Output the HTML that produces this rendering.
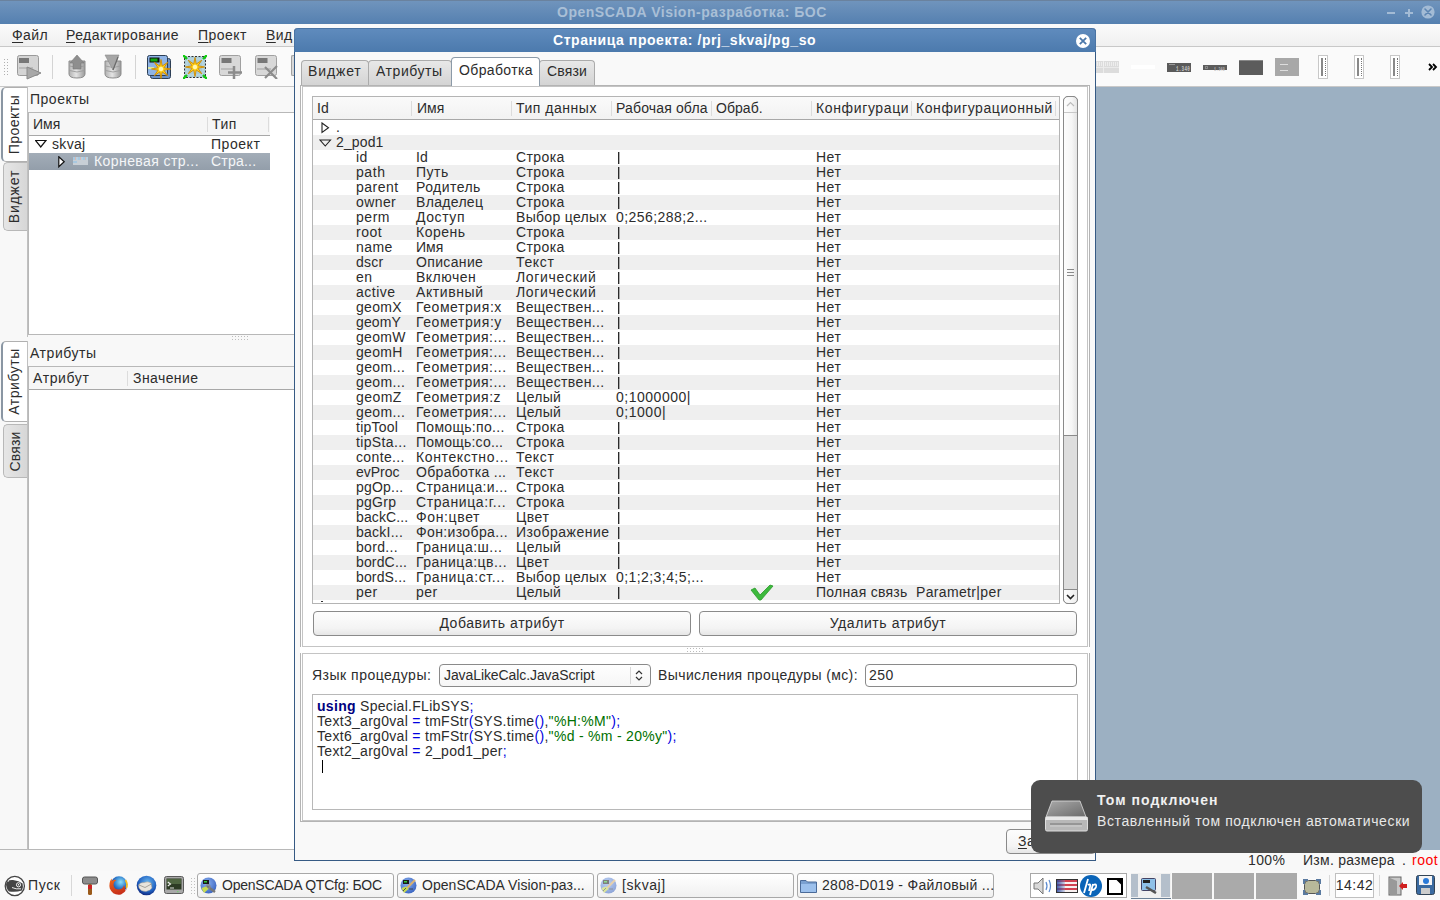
<!DOCTYPE html>
<html><head><meta charset="utf-8">
<style>
*{margin:0;padding:0;box-sizing:border-box}
html,body{width:1440px;height:900px;overflow:hidden;background:#f8f8f8;font-family:"Liberation Sans",sans-serif;font-size:14px;letter-spacing:0.45px;color:#2c2c2c}
.a{position:absolute}
.t{position:absolute;white-space:nowrap;line-height:15px}
#title{left:0;top:0;width:1440px;height:24px;background:linear-gradient(#7195bd,#5580b0);}
#title .tx{left:557px;top:5px;color:#a9bfd6;font-weight:bold;font-size:14px;letter-spacing:0.52px}
#menu{left:0;top:24px;width:1440px;height:23px;background:linear-gradient(#fbfbfb,#f0f0f0);border-bottom:1px solid #c8c8c8}
#tool{left:0;top:47px;width:1440px;height:40px;background:#fafafa;border-bottom:1px solid #c8c8c8}
#mdi{left:295px;top:87px;width:1145px;height:763px;background:#9cb0c2}
u{text-decoration:underline;text-decoration-thickness:1px;text-underline-offset:2px;}
</style></head><body>
<div id="title" class="a"><div class="a" style="left:0;top:0;width:1440px;height:1px;background:#6a829e"></div>
 <div class="a" style="left:1387px;top:12px;width:8px;height:2px;background:#a3bbd5"></div>
 <div class="a" style="left:1405px;top:12px;width:8px;height:2px;background:#a3bbd5"></div>
 <div class="a" style="left:1408px;top:9px;width:2px;height:8px;background:#a3bbd5"></div>
 <svg class="a" style="left:1421px;top:5px" width="14" height="14" viewBox="0 0 14 14"><circle cx="7" cy="7" r="6.6" fill="#a3bbd5"/><path d="M4 4 L10 10 M10 4 L4 10" stroke="#5d85b2" stroke-width="1.6" stroke-linecap="round"/></svg><div class="t tx">OpenSCADA Vision-разработка: БОС</div></div>
<div id="menu" class="a">
 <div class="t" style="left:12px;top:4px"><u>Ф</u>айл</div>
 <div class="t" style="left:66px;top:4px"><u>Р</u>едактирование</div>
 <div class="t" style="left:198px;top:4px"><u>П</u>роект</div>
 <div class="t" style="left:266px;top:4px"><u>В</u>ид</div>
</div>
<div id="tool" class="a">
 <div class="a" style="left:3px;top:11px;width:6px;height:18px;background-image:radial-gradient(#b0b0b0 0.7px,transparent 0.9px);background-size:3px 3px"></div>
 <svg class="a" style="left:16px;top:7px" width="26" height="26" viewBox="0 0 26 26">
  <rect x="1.5" y="1.5" width="21" height="20" rx="2" fill="#d4d4d4" stroke="#9a9a9a"/>
  <rect x="3" y="4" width="10" height="5" fill="#777"/>
  <rect x="3" y="13" width="14" height="2" fill="#bbb"/>
  <path d="M11 13 L25 19 L11 25 Z" fill="#a8a8a8" stroke="#8a8a8a"/>
 </svg>
 <div class="a" style="left:52px;top:8px;width:1px;height:24px;background:#d4d4d4"></div>
 <svg class="a" style="left:68px;top:7px" width="18" height="26" viewBox="0 0 18 26">
  <defs><linearGradient id="cyl" x1="0" x2="1"><stop offset="0" stop-color="#b0b0b0"/><stop offset="0.45" stop-color="#e4e4e4"/><stop offset="1" stop-color="#9a9a9a"/></linearGradient></defs>
  <path d="M1 7 V20 Q1 24 9 24 Q17 24 17 20 V7 Z" fill="url(#cyl)" stroke="#8c8c8c"/>
  <path d="M1.5 12 Q9 15 16.5 12 M1.5 16.5 Q9 19.5 16.5 16.5" fill="none" stroke="#9c9c9c" stroke-width="0.9"/>
  <path d="M9 1 L16 9 L13 9 L13 15 L5 15 L5 9 L2 9 Z" fill="#8e8e8e" stroke="#7a7a7a" stroke-width="0.6"/>
 </svg>
 <svg class="a" style="left:104px;top:7px" width="18" height="26" viewBox="0 0 18 26">
  <path d="M1 7 V20 Q1 24 9 24 Q17 24 17 20 V7 Z" fill="url(#cyl)" stroke="#8c8c8c"/>
  <path d="M1.5 12 Q9 15 16.5 12 M1.5 16.5 Q9 19.5 16.5 16.5" fill="none" stroke="#9c9c9c" stroke-width="0.9"/>
  <path d="M1 1 L15 1 L9 16 Z" fill="#a6a6a6" stroke="#8a8a8a" stroke-width="0.6"/>
  <path d="M14 3 L9 16" stroke="#6a6a6a" stroke-width="1.2"/>
 </svg>
 <div class="a" style="left:135px;top:8px;width:1px;height:24px;background:#d4d4d4"></div>
 <svg class="a" style="left:147px;top:8px" width="24" height="24" viewBox="0 0 24 24">
  <rect x="3.5" y="3.5" width="20" height="20" rx="2" fill="#6c92c8" stroke="#2c3e55"/>
  <rect x="0.5" y="0.5" width="20" height="20" rx="2" fill="#8fb4e6" stroke="#2c3e55"/>
  <rect x="2.5" y="2.5" width="10" height="5" fill="#111"/>
  <rect x="3.5" y="3.5" width="7" height="3" fill="#1a1"/>
  <rect x="1" y="12" width="6" height="2" fill="#dde8a0"/>
  <path d="M14.00,4.50 L15.22,11.04 L20.72,7.28 L16.96,12.78 L23.50,14.00 L16.96,15.22 L20.72,20.72 L15.22,16.96 L14.00,23.50 L12.78,16.96 L7.28,20.72 L11.04,15.22 L4.50,14.00 L11.04,12.78 L7.28,7.28 L12.78,11.04 Z" fill="#ffd21a" stroke="#d08a00" stroke-width="0.9"/><circle cx="14" cy="14" r="2.2" fill="#fff6b0"/>
 </svg>
 <svg class="a" style="left:183px;top:8px" width="24" height="24" viewBox="0 0 24 24">
  <rect x="1.5" y="1.5" width="21" height="21" fill="#a9cbd6" stroke="#333" stroke-dasharray="2 1.5"/>
  <path d="M4 4 L20 4 L20 20 L4 20 Z" fill="none" stroke="#c8e0e8" stroke-width="0.8"/>
  <path d="M0 0 L4 4 M24 0 L20 4 M0 24 L4 20 M24 24 L20 20" stroke="#1c1" stroke-width="2.4"/>
  <path d="M12.00,2.50 L13.22,9.04 L18.72,5.28 L14.96,10.78 L21.50,12.00 L14.96,13.22 L18.72,18.72 L13.22,14.96 L12.00,21.50 L10.78,14.96 L5.28,18.72 L9.04,13.22 L2.50,12.00 L9.04,10.78 L5.28,5.28 L10.78,9.04 Z" fill="#ffd21a" stroke="#d08a00" stroke-width="0.9"/><circle cx="12" cy="12" r="2.2" fill="#fff6b0"/>
 </svg>
 <svg class="a" style="left:219px;top:8px" width="24" height="24" viewBox="0 0 24 24">
  <rect x="0.5" y="0.5" width="21" height="20" rx="2" fill="#d8d8d8" stroke="#a0a0a0"/>
  <rect x="2.5" y="3" width="10" height="5" fill="#777"/>
  <rect x="2" y="13" width="14" height="2" fill="#bbb"/>
  <path d="M15 11 V24 M9 17.5 H23" stroke="#8c8c8c" stroke-width="2.5"/>
 </svg>
 <svg class="a" style="left:255px;top:8px" width="24" height="24" viewBox="0 0 24 24">
  <rect x="0.5" y="0.5" width="21" height="20" rx="2" fill="#d8d8d8" stroke="#a0a0a0"/>
  <rect x="2.5" y="3" width="10" height="5" fill="#777"/>
  <rect x="2" y="13" width="14" height="2" fill="#bbb"/>
  <path d="M10 12 L22 24 M22 11 L10 23" stroke="#8c8c8c" stroke-width="2.2"/>
 </svg>
 <div class="a" style="left:291px;top:8px;width:5px;height:21px;background:#d8d8d8;border:1px solid #a0a0a0;border-right:none;border-radius:2px 0 0 2px"></div>
 <!-- right side -->
 <div class="a" style="left:1096px;top:14px;width:23px;height:12px;background:#dcdcdc"></div>
 <div class="a" style="left:1096px;top:20px;width:23px;height:1px;background:#eaeaea"></div>
 <div class="a" style="left:1103px;top:14px;width:1px;height:12px;background:#ececec"></div>
 <div class="a" style="left:1097px;top:15px;width:21px;height:4px;background-image:repeating-linear-gradient(90deg,#f4f4f4 0 1px,transparent 1px 2px);opacity:.7"></div>
 <div class="a" style="left:1131px;top:18px;width:24px;height:4px;background:#fff"></div>
 <div class="a" style="left:1167px;top:16px;width:24px;height:9px;background:#5a5a5a"></div>
 <div class="a" style="left:1167px;top:14px;width:24px;height:2px;font-size:0"></div><div class="a" style="left:1169px;top:17px;width:6px;height:1px;background:#999"></div><svg class="a" style="left:1176px;top:17px" width="15" height="8"><text x="0" y="7" font-size="8" font-family="Liberation Mono" font-weight="bold" fill="#c4c4c4" textLength="14" lengthAdjust="spacingAndGlyphs">1.340</text></svg>
 <div class="a" style="left:1203px;top:18px;width:24px;height:5px;background:#5c5c5c"></div>
 <svg class="a" style="left:1214px;top:18px" width="12" height="6"><text x="0" y="5.5" font-size="6" font-family="Liberation Mono" font-weight="bold" fill="#bdbdbd" textLength="11" lengthAdjust="spacingAndGlyphs">1.340</text></svg><div class="a" style="left:1205px;top:19px;width:3px;height:3px;border:1px solid #888"></div>
 <div class="a" style="left:1239px;top:13px;width:24px;height:15px;background:#5c5c5c;border-top:1px solid #888"></div>
 <div class="a" style="left:1275px;top:11px;width:24px;height:18px;background:#a8a8a8"></div>
 <div class="a" style="left:1280px;top:17px;width:8px;height:7px;border-top:1px solid #ddd;border-bottom:1px solid #ddd"></div>
 <div class="a" style="left:1318px;top:8px;width:10px;height:24px;background:#fff;border:1px solid #c8c8c8"><div class="a" style="left:2px;top:2px;width:2px;height:18px;background:#888"></div><div class="a" style="left:5px;top:2px;width:2px;height:18px;border-right:1px dotted #777"></div></div>
 <div class="a" style="left:1354px;top:8px;width:10px;height:24px;background:#fff;border:1px solid #c8c8c8"><div class="a" style="left:2px;top:2px;width:2px;height:18px;background:#888"></div><div class="a" style="left:5px;top:2px;width:2px;height:18px;border-right:1px dotted #777"></div></div>
 <div class="a" style="left:1390px;top:8px;width:10px;height:24px;background:#fff;border:1px solid #c8c8c8"><div class="a" style="left:2px;top:2px;width:2px;height:18px;background:#888"></div><div class="a" style="left:5px;top:2px;width:2px;height:18px;border-right:1px dotted #777"></div></div>
 <svg class="a" style="left:1428px;top:16px" width="10" height="8" viewBox="0 0 10 8"><path d="M1 1 L4 4 L1 7 M5 1 L8 4 L5 7" fill="none" stroke="#000" stroke-width="1.8"/></svg>
</div>
<div id="mdi" class="a"></div>

<!-- left dock -->
<div id="left" class="a" style="left:0;top:87px;width:295px;height:763px;background:#f8f8f8">
 <!-- vtabs top -->
 <div class="a" style="left:1px;top:0px;width:27px;height:75px;background:#fff;border:1px solid #b0b0b0;border-right:none;border-left:2px solid #8a96a3;border-radius:5px 0 0 5px"></div>
 <div class="t" style="left:-23px;top:30px;width:75px;text-align:center;transform:rotate(-90deg);letter-spacing:0.50px">Проекты</div>
 <div class="a" style="left:3px;top:75px;width:25px;height:69px;background:linear-gradient(90deg,#e6e6e6,#d6d6d6);border:1px solid #b8b8b8;border-right:none;border-radius:5px 0 0 5px"></div>
 <div class="t" style="left:-20px;top:102px;width:69px;text-align:center;transform:rotate(-90deg);letter-spacing:0.87px">Виджет</div>
 <div class="a" style="left:27px;top:0;width:1px;height:250px;background:#c0c0c0"></div>
 <div class="t" style="left:30px;top:5px;letter-spacing:0.50px">Проекты</div>
 <div class="a" style="left:28px;top:25px;width:267px;height:223px;background:#fff;border:1px solid #b8b8b8;border-right:none">
  <div class="a" style="left:0;top:0;width:241px;height:23px;background:#f6f6f6;border-bottom:1px solid #a8a8a8"></div>
  <div class="a" style="left:178px;top:4px;width:1px;height:15px;background:#dcdcdc"></div>
  <div class="a" style="left:239px;top:4px;width:1px;height:15px;background:#dcdcdc"></div>
  <div class="t" style="left:4px;top:4px;letter-spacing:0.03px">Имя</div>
  <div class="t" style="left:183px;top:4px;letter-spacing:0.52px">Тип</div>
  <svg class="a" style="left:6px;top:27px" width="12" height="8"><path d="M0.5 0.5 L11 0.5 L5.75 7 Z" fill="none" stroke="#111" stroke-width="1.2"/></svg>
  <div class="t" style="left:23px;top:24px;letter-spacing:0.33px">skvaj</div>
  <div class="t" style="left:182px;top:24px;letter-spacing:0.55px">Проект</div>
  <div class="a" style="left:0;top:40px;width:241px;height:17px;background:linear-gradient(#a3adb8,#939eaa)"></div>
  <svg class="a" style="left:29px;top:43px" width="8" height="12"><path d="M0.8 0.8 L6.2 5.8 L0.8 10.8 Z" fill="#fff" stroke="#111" stroke-width="1.2"/></svg>
  <div class="a" style="left:44px;top:44px;width:15px;height:8px;background:#c8cfd6"><div class="a" style="left:0;top:0;width:15px;height:3px;background:repeating-linear-gradient(90deg,#a8c8e0 0 2px,#d8b8b0 2px 3px,#b8d0e0 3px 5px)"></div><div class="a" style="left:0;top:4px;width:4px;height:2px;background:#a8c8e0"></div></div>
  <div class="t" style="left:65px;top:41px;color:#f4f6f8;letter-spacing:0.42px">Корневая стр...</div>
  <div class="t" style="left:182px;top:41px;color:#f4f6f8;letter-spacing:0.21px">Стра...</div>
 </div>
 <div class="a" style="left:0;top:762px;width:28px;height:1px;background:#b8b8b8"></div>
 <!-- splitter dots -->
 <div class="a" style="left:231px;top:248px;width:18px;height:6px;background-image:radial-gradient(#bdbdbd 0.7px,transparent 0.9px);background-size:3px 3px"></div>
 <!-- lower vtabs -->
 <div class="a" style="left:1px;top:254px;width:27px;height:81px;background:#fff;border:1px solid #b0b0b0;border-right:none;border-left:2px solid #8a96a3;border-radius:5px 0 0 5px"></div>
 <div class="t" style="left:-26px;top:287px;width:81px;text-align:center;transform:rotate(-90deg);letter-spacing:0.56px">Атрибуты</div>
 <div class="a" style="left:3px;top:337px;width:25px;height:54px;background:linear-gradient(90deg,#e6e6e6,#d6d6d6);border:1px solid #b8b8b8;border-right:none;border-radius:5px 0 0 5px"></div>
 <div class="t" style="left:-12px;top:357px;width:54px;text-align:center;transform:rotate(-90deg);letter-spacing:0.14px">Связи</div>
 <div class="a" style="left:27px;top:254px;width:1px;height:509px;background:#c0c0c0"></div>
 <div class="t" style="left:30px;top:259px;letter-spacing:0.56px">Атрибуты</div>
 <div class="a" style="left:28px;top:279px;width:267px;height:484px;background:#fff;border:1px solid #b8b8b8;border-right:none">
  <div class="a" style="left:0;top:0;width:266px;height:23px;background:#f6f6f6;border-bottom:1px solid #a8a8a8"></div>
  <div class="a" style="left:98px;top:4px;width:1px;height:15px;background:#dcdcdc"></div>
  <div class="t" style="left:4px;top:4px;letter-spacing:0.61px">Атрибут</div>
  <div class="t" style="left:104px;top:4px;letter-spacing:0.42px">Значение</div>
 </div>
</div>

<!-- status bar -->
<div id="status" class="a" style="left:0;top:850px;width:1440px;height:21px;background:#f8f8f8">
 <div class="t" style="left:1248px;top:3px;letter-spacing:0.34px">100%</div>
 <div class="t" style="left:1303px;top:3px;letter-spacing:0.26px">Изм. размера</div>
 <div class="t" style="left:1402px;top:3px;letter-spacing:0.23px">.</div>
 <div class="t" style="left:1412px;top:3px;color:#f00;letter-spacing:0.49px">root</div>
</div>
<!-- taskbar -->
<div id="task" class="a" style="left:0;top:871px;width:1440px;height:29px;background:#f9f9f9">
 <svg class="a" style="left:4px;top:4px" width="22" height="22" viewBox="0 0 22 22"><circle cx="10.8" cy="11" r="9.6" fill="#fff" stroke="#454545" stroke-width="1.3"/><path d="M2 9 Q3 4.5 9 5 Q15 5.5 18.6 8.5 Q19.6 12 18 15.5 Q12 17.5 5 16.5 Q2.2 14 2 9 Z" fill="#454545"/><circle cx="14.5" cy="9.8" r="2.1" fill="none" stroke="#fff" stroke-width="0.9"/><circle cx="14.5" cy="9.8" r="0.7" fill="#fff"/><path d="M8 12.5 Q12 14.5 17 13.8" fill="none" stroke="#fff" stroke-width="0.9"/><circle cx="4.5" cy="6" r="0.6" fill="#fff"/></svg>
 <div class="t" style="left:28px;top:7px;letter-spacing:0.61px">Пуск</div>
 <div class="a" style="left:71px;top:4px;width:1px;height:21px;background:#d8d8d8"></div>
 <svg class="a" style="left:82px;top:5px" width="16" height="20" viewBox="0 0 16 20"><rect x="0.5" y="1" width="15" height="7" rx="2" fill="#8c8c8c" stroke="#555"/><rect x="6" y="8" width="4" height="11" rx="1.5" fill="#9a5a1a"/><rect x="6" y="9" width="4" height="4" fill="#c22"/></svg>
 <svg class="a" style="left:108px;top:4px" width="21" height="21" viewBox="0 0 21 21"><defs><radialGradient id="ffg" cx="0.6" cy="0.35" r="0.6"><stop offset="0" stop-color="#8fe0f8"/><stop offset="0.6" stop-color="#2f7fcf"/><stop offset="1" stop-color="#1a3f98"/></radialGradient><linearGradient id="ffo" x1="0" y1="0" x2="0.3" y2="1"><stop offset="0" stop-color="#f06a1a"/><stop offset="1" stop-color="#c8301a"/></linearGradient></defs><circle cx="11" cy="9.5" r="8.3" fill="url(#ffg)"/><path d="M19 8 Q20.5 16 13 19.5 Q5 21 1.8 13.5 Q0.5 8 3.5 3.5 L4 6 Q6 4 8.5 5 Q5.5 6.5 5.5 10 Q6 14.5 11 14.5 Q15 14 16 10 Q18 13 17 16 Q19.5 13 19 8 Z" fill="url(#ffo)"/><path d="M17.5 5 Q20 9 18.5 13" fill="none" stroke="#f8c020" stroke-width="1.5"/></svg>
 <svg class="a" style="left:136px;top:4px" width="21" height="21" viewBox="0 0 21 21"><defs><radialGradient id="tbg" cx="0.55" cy="0.35" r="0.65"><stop offset="0" stop-color="#6ab8f0"/><stop offset="0.7" stop-color="#2060c0"/><stop offset="1" stop-color="#102a80"/></radialGradient></defs><circle cx="10.5" cy="10.5" r="9.8" fill="url(#tbg)"/><path d="M2.5 10 Q4 7 8 7.5 Q12 6 15 8 L16 13 Q14 16 10 16.5 Q5 16.5 3 13 Z" fill="#e8e4dc" stroke="#9a9690" stroke-width="0.5"/><path d="M3 10 L9 12.5 L15.5 9" fill="none" stroke="#8a8680" stroke-width="0.7"/></svg>
 <svg class="a" style="left:164px;top:5px" width="20" height="18" viewBox="0 0 20 18"><rect x="0.5" y="0.5" width="19" height="17" rx="2" fill="#a8a8a8" stroke="#5a5a5a"/><rect x="2.5" y="2.5" width="15" height="11" fill="#2c3a24"/><rect x="3" y="3" width="14" height="5" fill="#4e6440"/><path d="M3.8 6 L6.5 8 L3.8 10" fill="none" stroke="#f0f0f0" stroke-width="1.1"/><path d="M6 12 H10" stroke="#ddd" stroke-width="1"/><rect x="13" y="15" width="1.5" height="1.2" fill="#7c7"/></svg>
 <div class="a" style="left:190px;top:6px;width:6px;height:18px;background-image:radial-gradient(#c0c0c0 0.6px,transparent 0.8px);background-size:3px 3px"></div>
 <div class="a" style="left:197px;top:2px;width:197px;height:25px;background:linear-gradient(#fff,#f0f0f0);border:1px solid #a8a8a8;border-radius:3px"></div>
 <svg class="a" style="left:200px;top:6px" width="17" height="17" viewBox="0 0 17 17"><defs><radialGradient id="osg1" cx="0.4" cy="0.35" r="0.7"><stop offset="0" stop-color="#8ab0f0"/><stop offset="1" stop-color="#3a64c0"/></radialGradient></defs><circle cx="8.5" cy="8.5" r="8" fill="url(#osg1)"/><rect x="3" y="3" width="6" height="4" fill="#1a1a1a"/><rect x="4" y="4" width="3" height="1.5" fill="#3c3"/><path d="M7 9 L15 15" stroke="#777" stroke-width="2.4"/><circle cx="8" cy="9.5" r="2" fill="none" stroke="#888" stroke-width="1.2"/><path d="M1.5 11 L6 9.5 L8.5 12 L4 16 Z" fill="#c8dc50"/></svg>
 <div class="t" style="left:222px;top:7px;letter-spacing:-0.24px">OpenSCADA QTCfg: БОС</div>
 <div class="a" style="left:397px;top:2px;width:197px;height:25px;background:linear-gradient(#fff,#f0f0f0);border:1px solid #a8a8a8;border-radius:3px"></div>
 <svg class="a" style="left:400px;top:6px" width="17" height="17" viewBox="0 0 17 17"><defs><radialGradient id="osg" cx="0.4" cy="0.35" r="0.7"><stop offset="0" stop-color="#8ab0f0"/><stop offset="1" stop-color="#3a64c0"/></radialGradient></defs><circle cx="8.5" cy="8.5" r="8" fill="url(#osg)"/><rect x="3" y="3" width="6" height="4" fill="#1a1a1a"/><rect x="4" y="4" width="3" height="1.5" fill="#3c3"/><path d="M6 12 L15 3" stroke="#d8b070" stroke-width="2.2"/><path d="M1.5 11 L6 9.5 L8.5 12 L4 16 Z" fill="#c8dc50"/><path d="M3 14 L6 11 M9 12 L13 12" stroke="#333" stroke-width="0.8"/></svg>
 <div class="t" style="left:422px;top:7px;letter-spacing:0.05px">OpenSCADA Vision-раз...</div>
 <div class="a" style="left:597px;top:2px;width:197px;height:25px;background:linear-gradient(#fff,#f0f0f0);border:1px solid #a8a8a8;border-radius:3px"></div>
 <svg class="a" style="left:600px;top:6px;opacity:0.55" width="17" height="17" viewBox="0 0 17 17"><defs><radialGradient id="osg3" cx="0.4" cy="0.35" r="0.7"><stop offset="0" stop-color="#8ab0f0"/><stop offset="1" stop-color="#3a64c0"/></radialGradient></defs><circle cx="8.5" cy="8.5" r="8" fill="url(#osg3)"/><rect x="3" y="3" width="6" height="4" fill="#1a1a1a"/><rect x="4" y="4" width="3" height="1.5" fill="#3c3"/><path d="M6 12 L15 3" stroke="#d8b070" stroke-width="2.2"/><path d="M1.5 11 L6 9.5 L8.5 12 L4 16 Z" fill="#c8dc50"/><path d="M3 14 L6 11 M9 12 L13 12" stroke="#333" stroke-width="0.8"/></svg>
 <div class="t" style="left:622px;top:7px;letter-spacing:0.58px">[skvaj]</div>
 <div class="a" style="left:797px;top:2px;width:197px;height:25px;background:linear-gradient(#fff,#f0f0f0);border:1px solid #a8a8a8;border-radius:3px"></div>
 <svg class="a" style="left:800px;top:7px" width="17" height="15" viewBox="0 0 17 15"><path d="M0.5 2.5 H6 L7.5 4 H16.5 V14.5 H0.5 Z" fill="#7aa0d0" stroke="#4a6a98"/><rect x="1" y="6" width="15" height="8" fill="#9cc0ec"/></svg>
 <div class="t" style="left:822px;top:7px;letter-spacing:0.31px">2808-D019 - Файловый ...</div>
 <div class="a" style="left:1030px;top:2px;width:97px;height:25px;background:#fff;border:1px solid #a8a8a8"></div>
 <svg class="a" style="left:1033px;top:6px" width="20" height="18" viewBox="0 0 20 18"><path d="M1 6 H5 L10 1 V17 L5 12 H1 Z" fill="#d8d8d8" stroke="#777"/><path d="M13 5 Q15 9 13 13 M16 3 Q19 9 16 15" fill="none" stroke="#5a8ad0" stroke-width="1.2"/></svg>
 <div class="a" style="left:1056px;top:8px;width:22px;height:14px;background:repeating-linear-gradient(#d04050 0 2px,#f8f0f0 2px 4px);border:1px solid #333"><div class="a" style="left:0;top:0;width:8px;height:12px;background:linear-gradient(90deg,rgba(40,70,160,.85),rgba(120,150,210,.3))"></div></div>
 <svg class="a" style="left:1080px;top:4px" width="22" height="22" viewBox="0 0 22 22"><circle cx="11" cy="11" r="11" fill="#0a64b8"/><path d="M8 4 L4 18 M8 10 Q11 8 10 12 L9 16 M13 9 L10 20 M13 10 Q17 8 16 12 Q15 15 12 15" fill="none" stroke="#fff" stroke-width="1.8"/></svg>
 <svg class="a" style="left:1107px;top:7px" width="16" height="17" viewBox="0 0 16 17"><path d="M1 1 H10 L15 6 V16 H1 Z" fill="#fff" stroke="#000" stroke-width="2"/><path d="M9 0 L16 0 L16 7 Z" fill="#000"/></svg>
 <div class="a" style="left:1131px;top:2px;width:40px;height:26px;background:#f0f0f0;border-bottom:1px solid #6a7f95"></div>
 <div class="a" style="left:1131px;top:3px;width:7px;height:23px;background:#b4bfcb"></div>
 <div class="a" style="left:1161px;top:3px;width:9px;height:23px;background:#b4bfcb"></div>
 <svg class="a" style="left:1141px;top:7px" width="17" height="16" viewBox="0 0 17 16"><rect x="0.5" y="0.5" width="14" height="12" rx="1" fill="#8ec0e8" stroke="#446"/><rect x="2" y="2" width="7" height="3" fill="#222"/><path d="M5 9 L15 15" stroke="#555" stroke-width="2.5"/></svg>
 <div class="a" style="left:1172px;top:2px;width:40px;height:26px;background:#aaaaaa"></div>
 <div class="a" style="left:1214px;top:2px;width:40px;height:26px;background:#aaaaaa"></div>
 <div class="a" style="left:1256px;top:2px;width:41px;height:26px;background:#aaaaaa"></div>
 <svg class="a" style="left:1303px;top:8px" width="18" height="16" viewBox="0 0 18 16"><rect x="1.5" y="1.5" width="15" height="13" rx="4" fill="#b8b89a" stroke="#555"/><path d="M0 0 H5 V2 H2 V5 H0 Z M18 0 H13 V2 H16 V5 H18 Z M0 16 H5 V14 H2 V11 H0 Z M18 16 H13 V14 H16 V11 H18 Z" fill="#5a7aa0"/></svg>
 <div class="a" style="left:1329px;top:4px;width:1px;height:21px;background:#d8d8d8"></div>
 <div class="a" style="left:1335px;top:2px;width:39px;height:25px;background:#fff;border:1px solid #c0c0c0"></div>
 <div class="t" style="left:1335px;width:39px;text-align:center;top:7px;letter-spacing:0.48px">14:42</div>
 <div class="a" style="left:1379px;top:4px;width:1px;height:21px;background:#d8d8d8"></div>
 <svg class="a" style="left:1388px;top:5px" width="20" height="20" viewBox="0 0 20 20"><rect x="1" y="1" width="12" height="18" fill="#c8c8c8" stroke="#666"/><path d="M2 2 L9 5 V19 L2 18 Z" fill="#999"/><path d="M11 10 L15 6 V8 H19 V12 H15 V14 Z" fill="#d02020"/></svg>
 <svg class="a" style="left:1416px;top:4px" width="19" height="20" viewBox="0 0 19 20"><rect x="0.5" y="0.5" width="18" height="19" rx="2" fill="#3a6aa0" stroke="#345"/><rect x="3" y="1" width="13" height="9" fill="#f4f4f4"/><rect x="5" y="13" width="9" height="6" fill="#ccc"/><circle cx="10" cy="6" r="3" fill="#2a7ad8"/></svg>
</div>
<!-- dialog -->
<div id="dlg" class="a" style="left:294px;top:28px;width:802px;height:833px;background:#f9f9f9;border:1px solid #365a84;border-top:none;border-radius:4px 4px 0 0"></div>
<div class="a" style="left:294px;top:28px;width:802px;height:24px;background:linear-gradient(#5f8bbd,#4c7aad);border-radius:4px 4px 0 0;border:1px solid #4a74a4;border-bottom:none">
 <div class="t" style="left:258px;top:4px;color:#fff;font-weight:bold;letter-spacing:0.56px">Страница проекта: /prj_skvaj/pg_so</div>
 <svg class="a" style="left:780px;top:4px" width="16" height="16" viewBox="0 0 16 16"><circle cx="8" cy="8" r="7" fill="#fff"/><path d="M4.8 4.8 L11.2 11.2 M11.2 4.8 L4.8 11.2" stroke="#4b78aa" stroke-width="1.8"/></svg>
</div>
<!-- tabs -->
<div class="a" style="left:301px;top:60px;width:68px;height:25px;background:linear-gradient(#e8e8e8,#d4d4d4);border:1px solid #ababab;border-bottom:none;border-radius:4px 4px 0 0"></div>
<div class="t" style="left:308px;top:64px;letter-spacing:0.87px">Виджет</div>
<div class="a" style="left:368px;top:60px;width:84px;height:25px;background:linear-gradient(#e8e8e8,#d4d4d4);border:1px solid #ababab;border-bottom:none;border-radius:4px 4px 0 0"></div>
<div class="t" style="left:376px;top:64px;letter-spacing:0.56px">Атрибуты</div>
<div class="a" style="left:539px;top:60px;width:56px;height:25px;background:linear-gradient(#e8e8e8,#d4d4d4);border:1px solid #ababab;border-bottom:none;border-radius:4px 4px 0 0"></div>
<div class="t" style="left:547px;top:64px;letter-spacing:0.14px">Связи</div>
<!-- pane -->
<div class="a" style="left:300px;top:85px;width:790px;height:737px;background:#fff;border:1px solid #b4b4b4"></div>
<div class="a" style="left:451px;top:57px;width:89px;height:29px;background:#fff;border:1px solid #8c9aa8;border-bottom:none;border-radius:4px 4px 0 0"></div>
<div class="t" style="left:459px;top:63px;letter-spacing:0.36px">Обработка</div>
<!-- frame1 -->
<div class="a" style="left:302px;top:86px;width:786px;height:561px;border:1px solid #c4c4c4;background:#fff"></div>
<!-- table -->
<div class="a" style="left:312px;top:96px;width:748px;height:508px;background:#fff;border:1px solid #b4b4b4"></div>
<div class="a" style="left:313px;top:97px;width:746px;height:23px;background:linear-gradient(#fafafa,#f2f2f2);border-bottom:1px solid #a8a8a8"></div>
<div class="a" style="left:411px;top:101px;width:1px;height:15px;background:#dcdcdc"></div>
<div class="a" style="left:511px;top:101px;width:1px;height:15px;background:#dcdcdc"></div>
<div class="a" style="left:611px;top:101px;width:1px;height:15px;background:#dcdcdc"></div>
<div class="a" style="left:711px;top:101px;width:1px;height:15px;background:#dcdcdc"></div>
<div class="a" style="left:811px;top:101px;width:1px;height:15px;background:#dcdcdc"></div>
<div class="a" style="left:911px;top:101px;width:1px;height:15px;background:#dcdcdc"></div>
<div class="a" style="left:1055px;top:101px;width:1px;height:15px;background:#dcdcdc"></div>
<div class="t" style="left:317px;top:101px;letter-spacing:0.20px">Id</div>
<div class="t" style="left:417px;top:101px;letter-spacing:0.03px">Имя</div>
<div class="t" style="left:516px;top:101px;letter-spacing:0.52px">Тип данных</div>
<div class="t" style="left:616px;top:101px;width:93px;overflow:hidden;letter-spacing:0.15px">Рабочая обла</div>
<div class="t" style="left:716px;top:101px;letter-spacing:0.04px">Обраб.</div>
<div class="t" style="left:816px;top:101px;width:92px;overflow:hidden;letter-spacing:0.63px">Конфигураци</div>
<div class="t" style="left:916px;top:101px;width:140px;overflow:hidden;letter-spacing:0.59px">Конфигурационный</div>
<div class="a" style="left:313px;top:120px;width:746px;height:15px;background:#ffffff"></div>
<div class="a" style="left:313px;top:135px;width:746px;height:15px;background:#efefef"></div>
<div class="a" style="left:313px;top:150px;width:746px;height:15px;background:#ffffff"></div>
<div class="a" style="left:313px;top:165px;width:746px;height:15px;background:#efefef"></div>
<div class="a" style="left:313px;top:180px;width:746px;height:15px;background:#ffffff"></div>
<div class="a" style="left:313px;top:195px;width:746px;height:15px;background:#efefef"></div>
<div class="a" style="left:313px;top:210px;width:746px;height:15px;background:#ffffff"></div>
<div class="a" style="left:313px;top:225px;width:746px;height:15px;background:#efefef"></div>
<div class="a" style="left:313px;top:240px;width:746px;height:15px;background:#ffffff"></div>
<div class="a" style="left:313px;top:255px;width:746px;height:15px;background:#efefef"></div>
<div class="a" style="left:313px;top:270px;width:746px;height:15px;background:#ffffff"></div>
<div class="a" style="left:313px;top:285px;width:746px;height:15px;background:#efefef"></div>
<div class="a" style="left:313px;top:300px;width:746px;height:15px;background:#ffffff"></div>
<div class="a" style="left:313px;top:315px;width:746px;height:15px;background:#efefef"></div>
<div class="a" style="left:313px;top:330px;width:746px;height:15px;background:#ffffff"></div>
<div class="a" style="left:313px;top:345px;width:746px;height:15px;background:#efefef"></div>
<div class="a" style="left:313px;top:360px;width:746px;height:15px;background:#ffffff"></div>
<div class="a" style="left:313px;top:375px;width:746px;height:15px;background:#efefef"></div>
<div class="a" style="left:313px;top:390px;width:746px;height:15px;background:#ffffff"></div>
<div class="a" style="left:313px;top:405px;width:746px;height:15px;background:#efefef"></div>
<div class="a" style="left:313px;top:420px;width:746px;height:15px;background:#ffffff"></div>
<div class="a" style="left:313px;top:435px;width:746px;height:15px;background:#efefef"></div>
<div class="a" style="left:313px;top:450px;width:746px;height:15px;background:#ffffff"></div>
<div class="a" style="left:313px;top:465px;width:746px;height:15px;background:#efefef"></div>
<div class="a" style="left:313px;top:480px;width:746px;height:15px;background:#ffffff"></div>
<div class="a" style="left:313px;top:495px;width:746px;height:15px;background:#efefef"></div>
<div class="a" style="left:313px;top:510px;width:746px;height:15px;background:#ffffff"></div>
<div class="a" style="left:313px;top:525px;width:746px;height:15px;background:#efefef"></div>
<div class="a" style="left:313px;top:540px;width:746px;height:15px;background:#ffffff"></div>
<div class="a" style="left:313px;top:555px;width:746px;height:15px;background:#efefef"></div>
<div class="a" style="left:313px;top:570px;width:746px;height:15px;background:#ffffff"></div>
<div class="a" style="left:313px;top:585px;width:746px;height:15px;background:#efefef"></div>
<div class="a" style="left:313px;top:600px;width:746px;height:3px;background:#ffffff"></div>
<svg class="a" style="left:321px;top:122px" width="9" height="12"><path d="M1 1 L7.5 5.75 L1 10.5 Z" fill="none" stroke="#222" stroke-width="1.1"/></svg>
<div class="t" style="left:336px;top:120px;letter-spacing:0.23px">.</div>
<svg class="a" style="left:319px;top:139px" width="13" height="8"><path d="M1 1 L11.5 1 L6.25 7 Z" fill="none" stroke="#222" stroke-width="1.1"/></svg>
<div class="t" style="left:336px;top:135px;letter-spacing:0.13px">2_pod1</div>
<div class="t" style="left:356px;top:150px;letter-spacing:0.48px">id</div>
<div class="t" style="left:416px;top:150px;letter-spacing:0.20px">Id</div>
<div class="t" style="left:516px;top:150px;letter-spacing:0.40px">Строка</div>
<div class="a" style="left:618px;top:152px;width:1px;height:12px;background:#2a2a2a;box-shadow:1px 0 0 rgba(0,0,0,0.3)"></div>
<div class="t" style="left:816px;top:150px;letter-spacing:0.51px">Нет</div>
<div class="t" style="left:356px;top:165px;letter-spacing:0.58px">path</div>
<div class="t" style="left:416px;top:165px;letter-spacing:0.48px">Путь</div>
<div class="t" style="left:516px;top:165px;letter-spacing:0.40px">Строка</div>
<div class="a" style="left:618px;top:167px;width:1px;height:12px;background:#2a2a2a;box-shadow:1px 0 0 rgba(0,0,0,0.3)"></div>
<div class="t" style="left:816px;top:165px;letter-spacing:0.51px">Нет</div>
<div class="t" style="left:356px;top:180px;letter-spacing:0.49px">parent</div>
<div class="t" style="left:416px;top:180px;letter-spacing:0.44px">Родитель</div>
<div class="t" style="left:516px;top:180px;letter-spacing:0.40px">Строка</div>
<div class="a" style="left:618px;top:182px;width:1px;height:12px;background:#2a2a2a;box-shadow:1px 0 0 rgba(0,0,0,0.3)"></div>
<div class="t" style="left:816px;top:180px;letter-spacing:0.51px">Нет</div>
<div class="t" style="left:356px;top:195px;letter-spacing:0.41px">owner</div>
<div class="t" style="left:416px;top:195px;letter-spacing:0.32px">Владелец</div>
<div class="t" style="left:516px;top:195px;letter-spacing:0.40px">Строка</div>
<div class="a" style="left:618px;top:197px;width:1px;height:12px;background:#2a2a2a;box-shadow:1px 0 0 rgba(0,0,0,0.3)"></div>
<div class="t" style="left:816px;top:195px;letter-spacing:0.51px">Нет</div>
<div class="t" style="left:356px;top:210px;letter-spacing:0.54px">perm</div>
<div class="t" style="left:416px;top:210px;letter-spacing:0.58px">Доступ</div>
<div class="t" style="left:516px;top:210px;letter-spacing:0.31px">Выбор целых</div>
<div class="t" style="left:616px;top:210px;letter-spacing:0.43px">0;256;288;2...</div>
<div class="t" style="left:816px;top:210px;letter-spacing:0.51px">Нет</div>
<div class="t" style="left:356px;top:225px;letter-spacing:0.49px">root</div>
<div class="t" style="left:416px;top:225px;letter-spacing:0.51px">Корень</div>
<div class="t" style="left:516px;top:225px;letter-spacing:0.40px">Строка</div>
<div class="a" style="left:618px;top:227px;width:1px;height:12px;background:#2a2a2a;box-shadow:1px 0 0 rgba(0,0,0,0.3)"></div>
<div class="t" style="left:816px;top:225px;letter-spacing:0.51px">Нет</div>
<div class="t" style="left:356px;top:240px;letter-spacing:0.46px">name</div>
<div class="t" style="left:416px;top:240px;letter-spacing:0.03px">Имя</div>
<div class="t" style="left:516px;top:240px;letter-spacing:0.40px">Строка</div>
<div class="a" style="left:618px;top:242px;width:1px;height:12px;background:#2a2a2a;box-shadow:1px 0 0 rgba(0,0,0,0.3)"></div>
<div class="t" style="left:816px;top:240px;letter-spacing:0.51px">Нет</div>
<div class="t" style="left:356px;top:255px;letter-spacing:0.27px">dscr</div>
<div class="t" style="left:416px;top:255px;letter-spacing:0.35px">Описание</div>
<div class="t" style="left:516px;top:255px;letter-spacing:0.66px">Текст</div>
<div class="a" style="left:618px;top:257px;width:1px;height:12px;background:#2a2a2a;box-shadow:1px 0 0 rgba(0,0,0,0.3)"></div>
<div class="t" style="left:816px;top:255px;letter-spacing:0.51px">Нет</div>
<div class="t" style="left:356px;top:270px;letter-spacing:0.34px">en</div>
<div class="t" style="left:416px;top:270px;letter-spacing:0.49px">Включен</div>
<div class="t" style="left:516px;top:270px;letter-spacing:0.68px">Логический</div>
<div class="a" style="left:618px;top:272px;width:1px;height:12px;background:#2a2a2a;box-shadow:1px 0 0 rgba(0,0,0,0.3)"></div>
<div class="t" style="left:816px;top:270px;letter-spacing:0.51px">Нет</div>
<div class="t" style="left:356px;top:285px;letter-spacing:0.49px">active</div>
<div class="t" style="left:416px;top:285px;letter-spacing:0.59px">Активный</div>
<div class="t" style="left:516px;top:285px;letter-spacing:0.68px">Логический</div>
<div class="a" style="left:618px;top:287px;width:1px;height:12px;background:#2a2a2a;box-shadow:1px 0 0 rgba(0,0,0,0.3)"></div>
<div class="t" style="left:816px;top:285px;letter-spacing:0.51px">Нет</div>
<div class="t" style="left:356px;top:300px;letter-spacing:0.28px">geomX</div>
<div class="t" style="left:416px;top:300px;letter-spacing:0.57px">Геометрия:x</div>
<div class="t" style="left:516px;top:300px;letter-spacing:0.36px">Веществен...</div>
<div class="a" style="left:618px;top:302px;width:1px;height:12px;background:#2a2a2a;box-shadow:1px 0 0 rgba(0,0,0,0.3)"></div>
<div class="t" style="left:816px;top:300px;letter-spacing:0.51px">Нет</div>
<div class="t" style="left:356px;top:315px;letter-spacing:0.09px">geomY</div>
<div class="t" style="left:416px;top:315px;letter-spacing:0.57px">Геометрия:y</div>
<div class="t" style="left:516px;top:315px;letter-spacing:0.36px">Веществен...</div>
<div class="a" style="left:618px;top:317px;width:1px;height:12px;background:#2a2a2a;box-shadow:1px 0 0 rgba(0,0,0,0.3)"></div>
<div class="t" style="left:816px;top:315px;letter-spacing:0.51px">Нет</div>
<div class="t" style="left:356px;top:330px;letter-spacing:0.30px">geomW</div>
<div class="t" style="left:416px;top:330px;letter-spacing:0.48px">Геометрия:...</div>
<div class="t" style="left:516px;top:330px;letter-spacing:0.36px">Веществен...</div>
<div class="a" style="left:618px;top:332px;width:1px;height:12px;background:#2a2a2a;box-shadow:1px 0 0 rgba(0,0,0,0.3)"></div>
<div class="t" style="left:816px;top:330px;letter-spacing:0.51px">Нет</div>
<div class="t" style="left:356px;top:345px;letter-spacing:0.31px">geomH</div>
<div class="t" style="left:416px;top:345px;letter-spacing:0.48px">Геометрия:...</div>
<div class="t" style="left:516px;top:345px;letter-spacing:0.36px">Веществен...</div>
<div class="a" style="left:618px;top:347px;width:1px;height:12px;background:#2a2a2a;box-shadow:1px 0 0 rgba(0,0,0,0.3)"></div>
<div class="t" style="left:816px;top:345px;letter-spacing:0.51px">Нет</div>
<div class="t" style="left:356px;top:360px;letter-spacing:0.37px">geom...</div>
<div class="t" style="left:416px;top:360px;letter-spacing:0.48px">Геометрия:...</div>
<div class="t" style="left:516px;top:360px;letter-spacing:0.36px">Веществен...</div>
<div class="a" style="left:618px;top:362px;width:1px;height:12px;background:#2a2a2a;box-shadow:1px 0 0 rgba(0,0,0,0.3)"></div>
<div class="t" style="left:816px;top:360px;letter-spacing:0.51px">Нет</div>
<div class="t" style="left:356px;top:375px;letter-spacing:0.37px">geom...</div>
<div class="t" style="left:416px;top:375px;letter-spacing:0.48px">Геометрия:...</div>
<div class="t" style="left:516px;top:375px;letter-spacing:0.36px">Веществен...</div>
<div class="a" style="left:618px;top:377px;width:1px;height:12px;background:#2a2a2a;box-shadow:1px 0 0 rgba(0,0,0,0.3)"></div>
<div class="t" style="left:816px;top:375px;letter-spacing:0.51px">Нет</div>
<div class="t" style="left:356px;top:390px;letter-spacing:0.44px">geomZ</div>
<div class="t" style="left:416px;top:390px;letter-spacing:0.49px">Геометрия:z</div>
<div class="t" style="left:516px;top:390px;letter-spacing:0.28px">Целый</div>
<div class="t" style="left:616px;top:390px;letter-spacing:0.51px">0;1000000|</div>
<div class="t" style="left:816px;top:390px;letter-spacing:0.51px">Нет</div>
<div class="t" style="left:356px;top:405px;letter-spacing:0.37px">geom...</div>
<div class="t" style="left:416px;top:405px;letter-spacing:0.48px">Геометрия:...</div>
<div class="t" style="left:516px;top:405px;letter-spacing:0.28px">Целый</div>
<div class="t" style="left:616px;top:405px;letter-spacing:0.52px">0;1000|</div>
<div class="t" style="left:816px;top:405px;letter-spacing:0.51px">Нет</div>
<div class="t" style="left:356px;top:420px;letter-spacing:0.25px">tipTool</div>
<div class="t" style="left:416px;top:420px;letter-spacing:0.30px">Помощь:по...</div>
<div class="t" style="left:516px;top:420px;letter-spacing:0.40px">Строка</div>
<div class="a" style="left:618px;top:422px;width:1px;height:12px;background:#2a2a2a;box-shadow:1px 0 0 rgba(0,0,0,0.3)"></div>
<div class="t" style="left:816px;top:420px;letter-spacing:0.51px">Нет</div>
<div class="t" style="left:356px;top:435px;letter-spacing:0.35px">tipSta...</div>
<div class="t" style="left:416px;top:435px;letter-spacing:0.22px">Помощь:со...</div>
<div class="t" style="left:516px;top:435px;letter-spacing:0.40px">Строка</div>
<div class="a" style="left:618px;top:437px;width:1px;height:12px;background:#2a2a2a;box-shadow:1px 0 0 rgba(0,0,0,0.3)"></div>
<div class="t" style="left:816px;top:435px;letter-spacing:0.51px">Нет</div>
<div class="t" style="left:356px;top:450px;letter-spacing:0.36px">conte...</div>
<div class="t" style="left:416px;top:450px;letter-spacing:0.62px">Контекстно...</div>
<div class="t" style="left:516px;top:450px;letter-spacing:0.66px">Текст</div>
<div class="a" style="left:618px;top:452px;width:1px;height:12px;background:#2a2a2a;box-shadow:1px 0 0 rgba(0,0,0,0.3)"></div>
<div class="t" style="left:816px;top:450px;letter-spacing:0.51px">Нет</div>
<div class="t" style="left:356px;top:465px;letter-spacing:-0.02px">evProc</div>
<div class="t" style="left:416px;top:465px;letter-spacing:0.32px">Обработка ...</div>
<div class="t" style="left:516px;top:465px;letter-spacing:0.66px">Текст</div>
<div class="a" style="left:618px;top:467px;width:1px;height:12px;background:#2a2a2a;box-shadow:1px 0 0 rgba(0,0,0,0.3)"></div>
<div class="t" style="left:816px;top:465px;letter-spacing:0.51px">Нет</div>
<div class="t" style="left:356px;top:480px;letter-spacing:0.21px">pgOp...</div>
<div class="t" style="left:416px;top:480px;letter-spacing:0.39px">Страница:и...</div>
<div class="t" style="left:516px;top:480px;letter-spacing:0.40px">Строка</div>
<div class="a" style="left:618px;top:482px;width:1px;height:12px;background:#2a2a2a;box-shadow:1px 0 0 rgba(0,0,0,0.3)"></div>
<div class="t" style="left:816px;top:480px;letter-spacing:0.51px">Нет</div>
<div class="t" style="left:356px;top:495px;letter-spacing:0.26px">pgGrp</div>
<div class="t" style="left:416px;top:495px;letter-spacing:0.60px">Страница:г...</div>
<div class="t" style="left:516px;top:495px;letter-spacing:0.40px">Строка</div>
<div class="a" style="left:618px;top:497px;width:1px;height:12px;background:#2a2a2a;box-shadow:1px 0 0 rgba(0,0,0,0.3)"></div>
<div class="t" style="left:816px;top:495px;letter-spacing:0.51px">Нет</div>
<div class="t" style="left:356px;top:510px;letter-spacing:0.12px">backC...</div>
<div class="t" style="left:416px;top:510px;letter-spacing:0.63px">Фон:цвет</div>
<div class="t" style="left:516px;top:510px;letter-spacing:0.49px">Цвет</div>
<div class="a" style="left:618px;top:512px;width:1px;height:12px;background:#2a2a2a;box-shadow:1px 0 0 rgba(0,0,0,0.3)"></div>
<div class="t" style="left:816px;top:510px;letter-spacing:0.51px">Нет</div>
<div class="t" style="left:356px;top:525px;letter-spacing:0.25px">backI...</div>
<div class="t" style="left:416px;top:525px;letter-spacing:0.37px">Фон:изобра...</div>
<div class="t" style="left:516px;top:525px;letter-spacing:0.48px">Изображение</div>
<div class="a" style="left:618px;top:527px;width:1px;height:12px;background:#2a2a2a;box-shadow:1px 0 0 rgba(0,0,0,0.3)"></div>
<div class="t" style="left:816px;top:525px;letter-spacing:0.51px">Нет</div>
<div class="t" style="left:356px;top:540px;letter-spacing:0.32px">bord...</div>
<div class="t" style="left:416px;top:540px;letter-spacing:0.50px">Граница:ш...</div>
<div class="t" style="left:516px;top:540px;letter-spacing:0.28px">Целый</div>
<div class="a" style="left:618px;top:542px;width:1px;height:12px;background:#2a2a2a;box-shadow:1px 0 0 rgba(0,0,0,0.3)"></div>
<div class="t" style="left:816px;top:540px;letter-spacing:0.51px">Нет</div>
<div class="t" style="left:356px;top:555px;letter-spacing:0.15px">bordC...</div>
<div class="t" style="left:416px;top:555px;letter-spacing:0.49px">Граница:цв...</div>
<div class="t" style="left:516px;top:555px;letter-spacing:0.49px">Цвет</div>
<div class="a" style="left:618px;top:557px;width:1px;height:12px;background:#2a2a2a;box-shadow:1px 0 0 rgba(0,0,0,0.3)"></div>
<div class="t" style="left:816px;top:555px;letter-spacing:0.51px">Нет</div>
<div class="t" style="left:356px;top:570px;letter-spacing:0.15px">bordS...</div>
<div class="t" style="left:416px;top:570px;letter-spacing:0.63px">Граница:ст...</div>
<div class="t" style="left:516px;top:570px;letter-spacing:0.31px">Выбор целых</div>
<div class="t" style="left:616px;top:570px;letter-spacing:0.43px">0;1;2;3;4;5;...</div>
<div class="t" style="left:816px;top:570px;letter-spacing:0.51px">Нет</div>
<div class="t" style="left:356px;top:585px;letter-spacing:0.46px">per</div>
<div class="t" style="left:416px;top:585px;letter-spacing:0.46px">per</div>
<div class="t" style="left:516px;top:585px;letter-spacing:0.28px">Целый</div>
<div class="a" style="left:618px;top:587px;width:1px;height:12px;background:#2a2a2a;box-shadow:1px 0 0 rgba(0,0,0,0.3)"></div>
<svg class="a" style="left:750px;top:584px" width="24" height="17" viewBox="0 0 24 17"><path d="M1 6 L5 4 L10 11 L20 1 L23 2 L11 16 L9 16 Z" fill="#3cb93c" stroke="#2a9a2a" stroke-width="0.8"/></svg>
<div class="t" style="left:816px;top:585px;letter-spacing:0.28px">Полная связь</div>
<div class="t" style="left:916px;top:585px;letter-spacing:0.35px">Parametr|per</div>
<div class="a" style="left:321px;top:601px;width:2px;height:1px;background:#333"></div>
<!-- scrollbar -->
<div class="a" style="left:1063px;top:96px;width:15px;height:508px;background:#dedede;border:1px solid #8a8a8a;border-radius:5px"></div>
<div class="a" style="left:1063px;top:96px;width:15px;height:340px;background:linear-gradient(90deg,#fdfdfd,#f6f6f6 60%,#e4e4e4);border:1px solid #8a8a8a;border-radius:5px 5px 0 0"></div>
<div class="a" style="left:1064px;top:112px;width:13px;height:1px;background:#c8c8c8"></div>
<svg class="a" style="left:1066px;top:101px" width="9" height="6"><path d="M1 5 L4.5 1.5 L8 5" fill="none" stroke="#bcbcbc" stroke-width="1.2"/></svg>
<div class="a" style="left:1067px;top:269px;width:7px;height:1px;background:#8a8a8a"></div>
<div class="a" style="left:1067px;top:272px;width:7px;height:1px;background:#8a8a8a"></div>
<div class="a" style="left:1067px;top:275px;width:7px;height:1px;background:#8a8a8a"></div>
<div class="a" style="left:1063px;top:589px;width:15px;height:15px;background:linear-gradient(90deg,#fdfdfd,#eee);border:1px solid #8a8a8a;border-radius:0 0 5px 5px"></div>
<svg class="a" style="left:1066px;top:594px" width="9" height="6"><path d="M1 1 L4.5 4.5 L8 1" fill="none" stroke="#222" stroke-width="1.6"/></svg>
<!-- buttons -->
<div class="a" style="left:313px;top:611px;width:378px;height:25px;background:linear-gradient(#fdfdfd,#f4f4f4 70%,#e6e6e6);border:1px solid #8a8a8a;border-radius:4px"></div>
<div class="t" style="left:313px;top:616px;width:378px;text-align:center;letter-spacing:0.55px">Добавить атрибут</div>
<div class="a" style="left:699px;top:611px;width:378px;height:25px;background:linear-gradient(#fdfdfd,#f4f4f4 70%,#e6e6e6);border:1px solid #8a8a8a;border-radius:4px"></div>
<div class="t" style="left:699px;top:616px;width:378px;text-align:center;letter-spacing:0.57px">Удалить атрибут</div>
<div class="a" style="left:300px;top:647px;width:790px;height:6px;background:#fff"></div>
<div class="a" style="left:686px;top:647px;width:18px;height:6px;background-image:radial-gradient(#bcbcbc 0.7px,transparent 0.9px);background-size:3px 3px"></div>
<!-- frame2 -->
<div class="a" style="left:302px;top:653px;width:786px;height:168px;border:1px solid #c4c4c4;background:#fff"></div>
<div class="t" style="left:312px;top:668px;letter-spacing:0.50px">Язык процедуры:</div>
<div class="a" style="left:439px;top:664px;width:212px;height:23px;background:linear-gradient(#fefefe,#f6f6f6);border:1px solid #8a8a8a;border-radius:4px"></div>
<div class="a" style="left:630px;top:667px;width:1px;height:17px;background:#d8d8d8"></div>
<svg class="a" style="left:635px;top:669px" width="8" height="13"><path d="M1 5 L4 2 L7 5 M1 8 L4 11 L7 8" fill="none" stroke="#333" stroke-width="1.2"/></svg>
<div class="t" style="left:444px;top:668px;letter-spacing:-0.09px">JavaLikeCalc.JavaScript</div>
<div class="t" style="left:658px;top:668px;letter-spacing:0.40px">Вычисления процедуры (мс):</div>
<div class="a" style="left:865px;top:664px;width:212px;height:23px;background:#fff;border:1px solid #8a8a8a;border-radius:4px"></div>
<div class="t" style="left:869px;top:668px;letter-spacing:0.48px">250</div>
<div class="a" style="left:312px;top:694px;width:766px;height:116px;background:#fff;border:1px solid #b8b8b8"></div>
<div class="t" style="left:317px;top:699px;letter-spacing:0.3px"><b style="color:#000080">using</b> Special.FLibSYS<span style="color:#0000e0">;</span></div>
<div class="t" style="left:317px;top:714px;letter-spacing:0.3px">Text3_arg0val <span style="color:#0000e0">=</span> tmFStr<span style="color:#0000e0">(</span>SYS.time<span style="color:#0000e0">()</span>,<span style="color:#007000">"%H:%M"</span><span style="color:#0000e0">);</span></div>
<div class="t" style="left:317px;top:729px;letter-spacing:0.3px">Text6_arg0val <span style="color:#0000e0">=</span> tmFStr<span style="color:#0000e0">(</span>SYS.time<span style="color:#0000e0">()</span>,<span style="color:#007000">"%d - %m - 20%y"</span><span style="color:#0000e0">);</span></div>
<div class="t" style="left:317px;top:744px;letter-spacing:0.3px">Text2_arg0val <span style="color:#0000e0">=</span> 2_pod1_per<span style="color:#0000e0">;</span></div>
<div class="a" style="left:322px;top:760px;width:1px;height:13px;background:#000"></div>
<!-- close button -->
<div class="a" style="left:1006px;top:829px;width:90px;height:25px;background:linear-gradient(#fdfdfd,#f4f4f4 70%,#e6e6e6);border:1px solid #8a8a8a;border-radius:4px"></div>
<div class="t" style="left:1018px;top:834px"><u>З</u>акрыть</div>
<!-- notification -->
<div class="a" style="left:1031px;top:780px;width:391px;height:73px;background:#4d4d4d;border-radius:9px"></div>
<svg class="a" style="left:1044px;top:800px" width="46" height="34" viewBox="0 0 46 34"><defs><linearGradient id="dg" x1="0" y1="0" x2="1" y2="1"><stop offset="0" stop-color="#aaa"/><stop offset="1" stop-color="#6a6a6a"/></linearGradient></defs><path d="M8 1 H36 L42 17 H2 Z" fill="url(#dg)" stroke="#ddd" stroke-width="0.8"/><rect x="1.5" y="17" width="42" height="14" rx="1.5" fill="#b8b8b8" stroke="#ddd"/><rect x="1.5" y="17" width="42" height="3" fill="#e8e8e8"/><path d="M6 24 H38" stroke="#808080" stroke-width="1.2"/><path d="M6 26 H38" stroke="#d8d8d8" stroke-width="0.8"/></svg>
<div class="t" style="left:1097px;top:793px;color:#f0f0f0;font-weight:bold;letter-spacing:1.05px">Том подключен</div>
<div class="t" style="left:1097px;top:814px;color:#e8e8e8;letter-spacing:0.62px">Вставленный том подключен автоматически</div>
</body></html>
